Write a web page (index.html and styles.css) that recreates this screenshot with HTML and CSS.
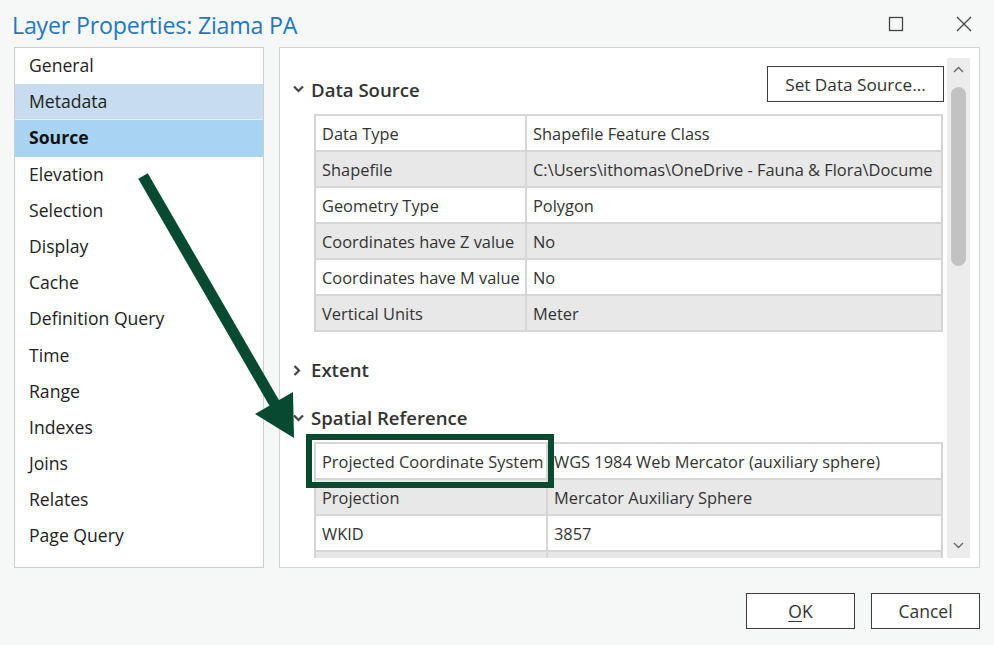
FILE: index.html
```html
<!DOCTYPE html>
<html lang="en">
<head>
<meta charset="utf-8">
<title>Layer Properties: Ziama PA</title>
<link rel="stylesheet" href="styles.css">
</head>
<body>
<div class="dialog">
  <header class="titlebar">
    <h1 class="title">Layer Properties: Ziama PA</h1>
    <div class="win-controls">
      <svg class="win-btn" width="16" height="16" viewBox="0 0 16 16"><rect x="1.5" y="1.5" width="13" height="13" fill="none" stroke="#444" stroke-width="1.3"/></svg>
      <svg class="win-btn" width="16" height="16" viewBox="0 0 16 16"><path d="M1 1 L15 15 M15 1 L1 15" stroke="#444" stroke-width="1.3" fill="none"/></svg>
    </div>
  </header>

  <main class="content">
    <nav class="nav">
      <ul class="nav-list">
        <li class="nav-item">General</li>
        <li class="nav-item hover">Metadata</li>
        <li class="nav-item active">Source</li>
        <li class="nav-item">Elevation</li>
        <li class="nav-item">Selection</li>
        <li class="nav-item">Display</li>
        <li class="nav-item">Cache</li>
        <li class="nav-item">Definition Query</li>
        <li class="nav-item">Time</li>
        <li class="nav-item">Range</li>
        <li class="nav-item">Indexes</li>
        <li class="nav-item">Joins</li>
        <li class="nav-item">Relates</li>
        <li class="nav-item">Page Query</li>
      </ul>
    </nav>

    <section class="panel">
      <div class="scroll">
        <div class="section-head first">
          <svg class="chev" width="11" height="8" viewBox="0 0 11 8"><path d="M1 1.5 L5.5 6 L10 1.5" fill="none" stroke="#444" stroke-width="2.2"/></svg>
          <h2 class="section-title">Data Source</h2>
          <button class="btn set-source">Set Data Source...</button>
        </div>
        <table class="props props-a">
          <tr><td class="k">Data Type</td><td>Shapefile Feature Class</td></tr>
          <tr class="alt"><td class="k">Shapefile</td><td>C:\Users\ithomas\OneDrive - Fauna &amp; Flora\Docume</td></tr>
          <tr><td class="k">Geometry Type</td><td>Polygon</td></tr>
          <tr class="alt"><td class="k">Coordinates have Z value</td><td>No</td></tr>
          <tr><td class="k">Coordinates have M value</td><td>No</td></tr>
          <tr class="alt"><td class="k">Vertical Units</td><td>Meter</td></tr>
        </table>

        <div class="section-head extent">
          <svg class="chev right" width="11" height="11" viewBox="0 0 11 11"><path d="M2.5 1 L7 5.5 L2.5 10" fill="none" stroke="#444" stroke-width="2.2"/></svg>
          <h2 class="section-title">Extent</h2>
        </div>

        <div class="section-head spatial">
          <svg class="chev" width="11" height="8" viewBox="0 0 11 8"><path d="M1 1.5 L5.5 6 L10 1.5" fill="none" stroke="#444" stroke-width="2.2"/></svg>
          <h2 class="section-title">Spatial Reference</h2>
        </div>
        <table class="props props-b">
          <tr><td class="k">Projected Coordinate System</td><td>WGS 1984 Web Mercator (auxiliary sphere)</td></tr>
          <tr class="alt"><td class="k">Projection</td><td>Mercator Auxiliary Sphere</td></tr>
          <tr><td class="k">WKID</td><td>3857</td></tr>
          <tr class="alt"><td class="k"></td><td></td></tr>
        </table>
      </div>

      <div class="scrollbar">
        <svg class="sb-arrow" width="11" height="7" viewBox="0 0 11 7"><path d="M1 6 L5.5 1.5 L10 6" fill="none" stroke="#666" stroke-width="1.4"/></svg>
        <div class="sb-track"><div class="sb-thumb"></div></div>
        <svg class="sb-arrow" width="11" height="7" viewBox="0 0 11 7"><path d="M1 1 L5.5 5.5 L10 1" fill="none" stroke="#666" stroke-width="1.4"/></svg>
      </div>
    </section>
  </main>

  <footer class="footer">
    <button class="btn dlg-btn"><span class="ul">O</span>K</button>
    <button class="btn dlg-btn">Cancel</button>
  </footer>

  <div class="highlight"></div>
  <svg class="annot" width="994" height="645" viewBox="0 0 994 645">
    <line x1="143" y1="176" x2="276" y2="406" stroke="#074a32" stroke-width="11"/>
    <polygon points="294,438 255,414 293,392" fill="#074a32"/>
  </svg>
</div>
</body>
</html>
```

FILE: styles.css
```css
* { box-sizing: border-box; }

html, body {
  margin: 0;
  padding: 0;
  background: #f6f7f7;
}

body {
  font-family: "Open Sans", "Noto Sans", sans-serif;
  color: #2b2b2b;
}

.dialog {
  position: relative;
  width: 994px;
  height: 645px;
  overflow: hidden;
}

.titlebar {
  height: 47px;
  display: flex;
  align-items: center;
  justify-content: space-between;
  padding: 0 22px 0 12px;
}

.title {
  margin: 0;
  font-size: 23.2px;
  font-weight: 400;
  color: #1e79bf;
  letter-spacing: -0.2px;
  position: relative;
  top: 1px;
}

.win-controls {
  display: flex;
  gap: 52px;
  align-items: center;
}

.win-btn { display: block; }

.content {
  display: flex;
  gap: 15px;
  padding: 0 14px;
  height: 521px;
}

.nav {
  width: 250px;
  flex: none;
  background: #fff;
  border: 1px solid #cdcdcd;
}

.nav-list {
  list-style: none;
  margin: 0;
  padding: 0;
}

.nav-item {
  height: 36.2px;
  line-height: 35px;
  padding-left: 14px;
  font-size: 17.6px;
  color: #222;
}

.nav-item.hover {
  background: #c7dcee;
  border-bottom: 1px solid #e6f0f8;
}

.nav-item.active {
  background: #a8d4f1;
  font-weight: 700;
  color: #111;
}

.panel {
  flex: 1;
  display: flex;
  background: #fff;
  border: 1px solid #d2d2d2;
  padding: 10px 9px 9px 0;
}

.scroll {
  flex: 1;
  overflow: hidden;
  padding-left: 13px;
  padding-right: 4px;
}

.section-head {
  display: flex;
  align-items: center;
  height: 24px;
}

.section-head.first {
  height: 36px;
  margin-top: 8px;
  align-items: flex-end;
}

.section-head.first .chev { margin-bottom: 9px; }

.chev { flex: none; display: block; margin-right: 7px; }
.chev.right { margin-left: -1px; margin-right: 8px; }

.section-title {
  margin: 0;
  font-size: 18.6px;
  font-weight: 600;
  color: #333;
  line-height: 24px;
  white-space: nowrap;
}

.btn {
  font-family: "Open Sans", "Noto Sans", sans-serif;
  background: #fff;
  border: 1px solid #3c3c3c;
  color: #333;
  cursor: pointer;
}

.set-source {
  margin-left: auto;
  width: 177px;
  height: 36px;
  font-size: 17.2px;
  padding: 0;
  margin-right: -1px;
}

.props {
  border-collapse: collapse;
  margin-left: 21px;
  width: 629px;
  table-layout: fixed;
  border: 2px solid #d3d3d3;
  font-size: 16.4px;
  color: #333;
}

.props-a { margin-top: 12px; }

.props td {
  height: 36px;
  padding: 0 6px;
  border-top: 2px solid #d6d6d6;
  border-bottom: 2px solid #d6d6d6;
  white-space: nowrap;
  overflow: hidden;
  text-overflow: clip;
}

.props td.k {
  border-right: 2px solid #d6d6d6;
}

.props-a td.k { width: 211px; }
.props-b td.k { width: 232px; }

.props tr.alt td { background: #e8e8e8; }

.section-head.extent { margin-top: 26px; }
.section-head.spatial { margin-top: 24px; }

.props-b { margin-top: 12px; }

.scrollbar {
  width: 23px;
  flex: none;
  background: #ececec;
  display: flex;
  flex-direction: column;
  align-items: center;
  padding: 8px 0 9px;
}

.sb-arrow { flex: none; display: block; }

.sb-track {
  flex: 1;
  width: 100%;
  padding: 14px 4px 0;
}

.sb-thumb {
  width: 15px;
  height: 179px;
  border-radius: 8px;
  background: #c2c2c2;
}

.footer {
  display: flex;
  justify-content: flex-end;
  gap: 16px;
  padding: 25px 14px 0;
}

.dlg-btn {
  width: 109px;
  height: 36px;
  font-size: 17.5px;
  padding: 0;
}

.ul { text-decoration: underline; text-underline-offset: 3px; }

.highlight {
  position: absolute;
  left: 306px;
  top: 434px;
  width: 248px;
  height: 54px;
  border: 6px solid #074a32;
  pointer-events: none;
}

.annot {
  position: absolute;
  left: 0;
  top: 0;
  pointer-events: none;
}
```
